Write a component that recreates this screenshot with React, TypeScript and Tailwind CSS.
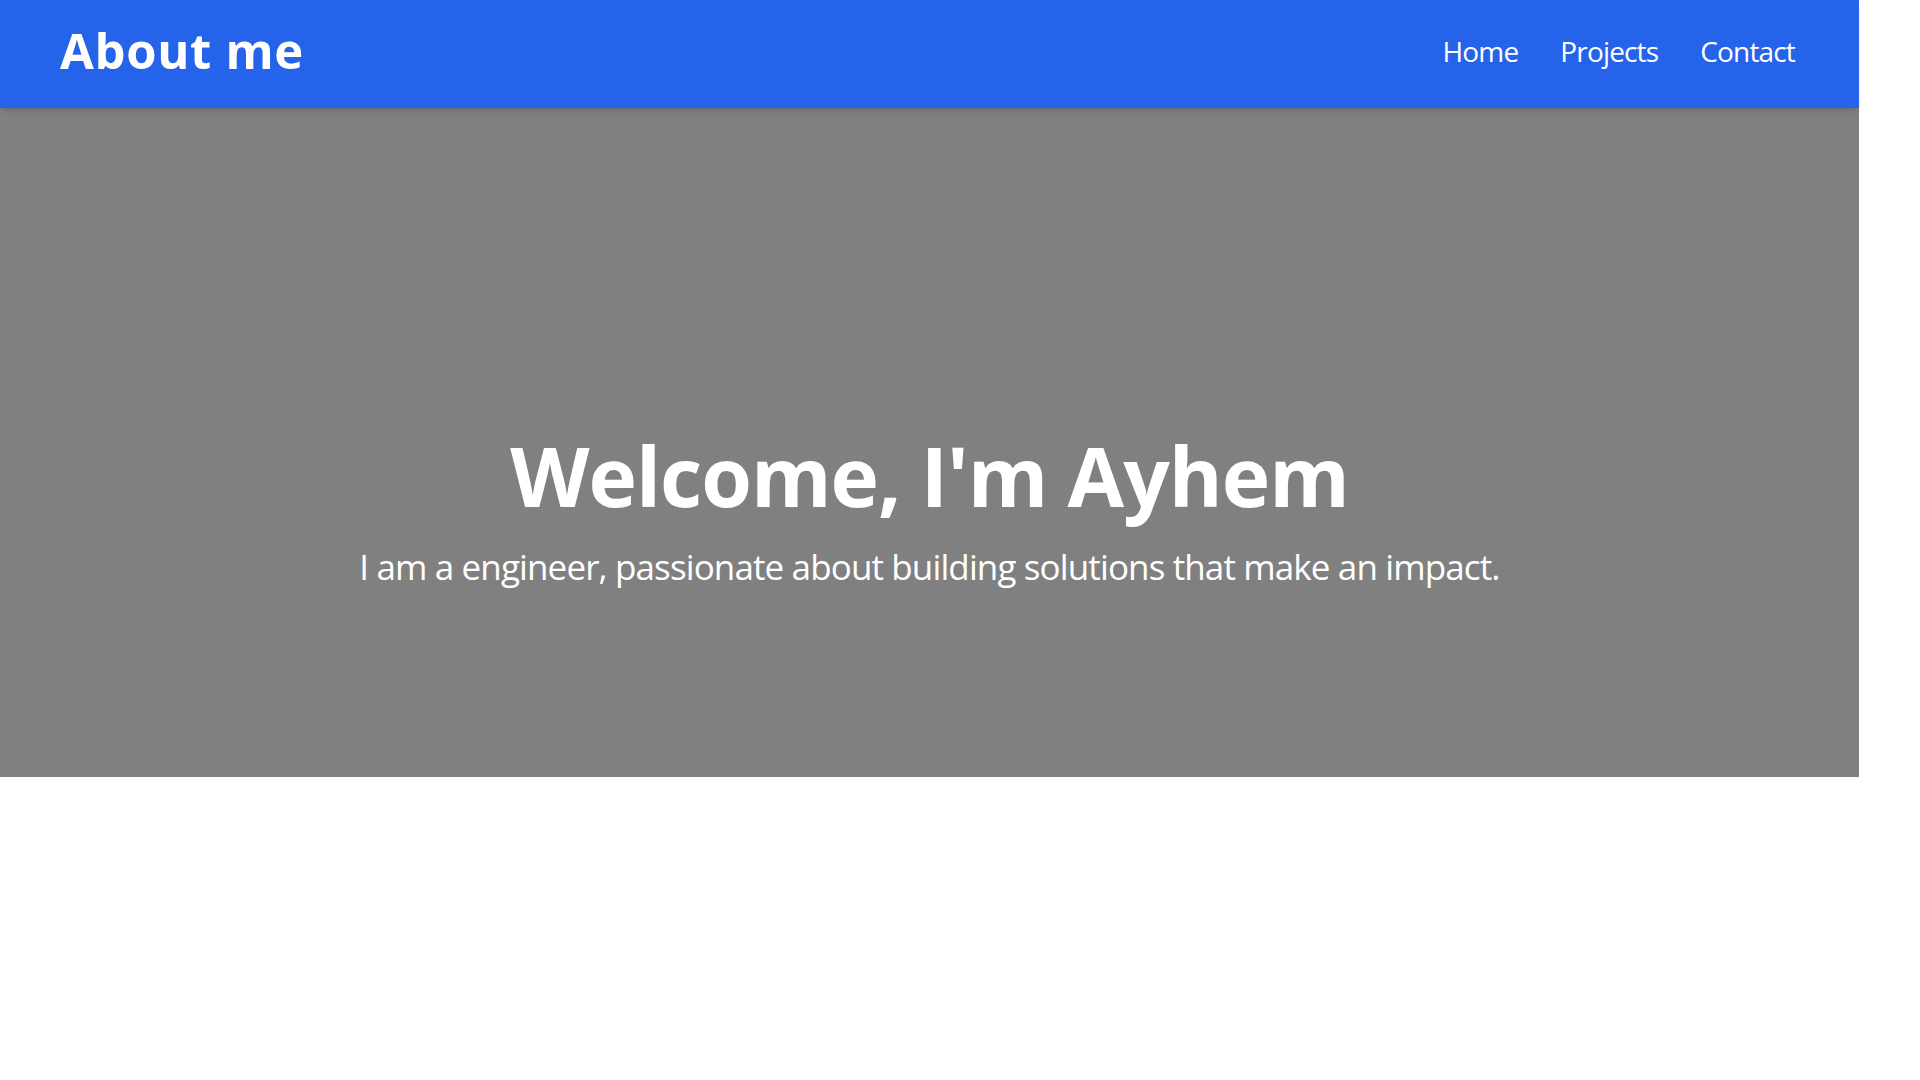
import React from 'react'

const links = ['Home', 'Projects', 'Contact']

const App: React.FC = () => {
  return (
    <div className="w-[1859px] min-h-screen bg-white font-['Open_Sans',sans-serif] text-white">
      <header className="relative z-10 h-[108px] bg-[#2563eb] pl-[60px] pr-[64px] pb-[7px] flex items-center justify-between shadow-md">
        <h1 className="text-[49px] font-bold leading-none tracking-[0.014em]">About me</h1>
        <nav className="flex items-center gap-[42px]">
          {links.map((link) => (
            <a key={link} href="#" className="text-[28px] leading-none tracking-[-0.03em]">
              {link}
            </a>
          ))}
        </nav>
      </header>

      <section className="h-[669px] bg-[#808080] flex flex-col items-center justify-center pt-[132px]">
        <h2 className="text-[82px] font-bold leading-none tracking-[-0.012em]">Welcome, I'm Ayhem</h2>
        <p className="mt-[33px] text-[35px] leading-none tracking-[-0.025em]">
          I am a engineer, passionate about building solutions that make an impact.
        </p>
      </section>
    </div>
  )
}

export default App
